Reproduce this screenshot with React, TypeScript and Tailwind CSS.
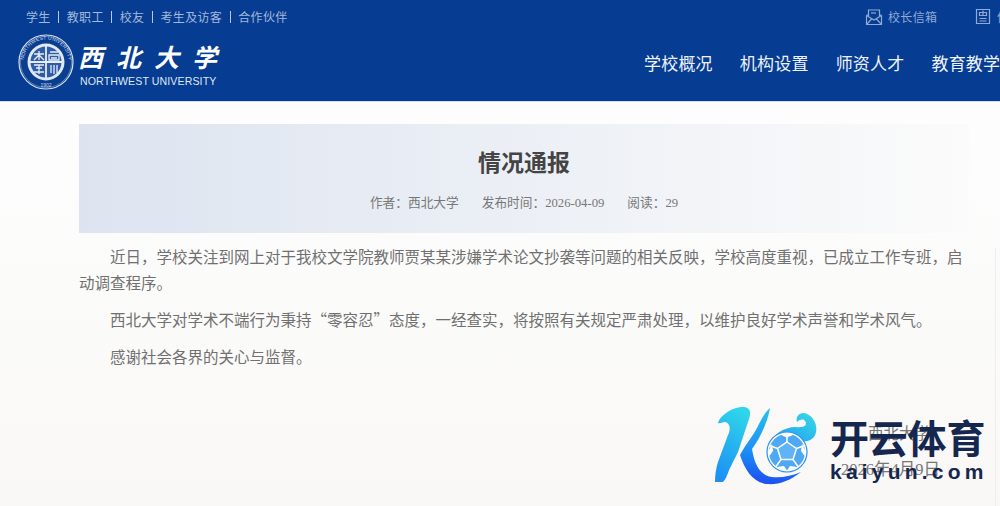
const CJK = "font-['Noto_Sans_CJK_SC','Liberation_Sans',sans-serif]";
const SERIF = "font-['Liberation_Serif','Noto_Sans_CJK_SC',serif]";

const topLinks = ['学生', '教职工', '校友', '考生及访客', '合作伙伴'];
const navItems = ['学校概况', '机构设置', '师资人才', '教育教学', '科学研究'];

const Seal = () => (
  <svg width="56" height="56" viewBox="0 0 56 56" className="shrink-0">
    <defs>
      <path id="ringTop" d="M5.5 28a22.5 22.5 0 0 1 45 0" />
    </defs>
    <circle cx="28" cy="28" r="27" fill="#0a3f90" stroke="#d5e0f1" strokeWidth="1.2" />
    <circle cx="28" cy="28" r="25.6" fill="none" stroke="#8fa9d3" strokeWidth="0.6" />
    <text fontSize="5" fill="#cddaee" fontFamily="Liberation Sans" letterSpacing="0.15">
      <textPath href="#ringTop" startOffset="2">NORTHWEST UNIVERSITY</textPath>
    </text>
    <text x="28" y="52.5" fontSize="5" fill="#cddaee" textAnchor="middle" fontFamily="Liberation Sans">1902</text>
    <circle cx="28" cy="28" r="18.5" fill="#dfe8f5" />
    <circle cx="28" cy="28" r="15.5" fill="#2f5ca5" />
    <g stroke="#e6edf8" strokeWidth="1.3" fill="none">
      <path d="M28 12v32M12 28h32" strokeWidth="1.8" />
      <path d="M21 17v9M16 20h10M16 26l5-5 5 5" />
      <path d="M32 18h8M31 21h10v5H31zM33 24h6" />
      <path d="M16 31h10M18 34h6M16 38h10M21 31v9" />
      <path d="M33 31v8M36 31v9M39 31v8" />
    </g>
  </svg>
);

const MailboxIcon = () => (
  <svg width="18" height="18" viewBox="0 0 18 18" fill="none" stroke="currentColor" strokeWidth="1.2" className="shrink-0">
    <path d="M3.5 8V2h11v6" />
    <path d="M6 5h5" />
    <path d="M1.5 7.5v9h15v-9l-2-1M3.5 6.500l-2 1" />
    <path d="M1.500 7.500 9 12l7.500-4.500M1.500 16.500 7 10.500M16.500 16.500 11 10.500" />
  </svg>
);

const NoticeIcon = () => (
  <svg width="16" height="17" viewBox="0 0 16 17" fill="none" stroke="currentColor" strokeWidth="1.2" className="shrink-0">
    <path d="M1.500 1.500h13v14h-13z" />
    <path d="M4.500 4.500h7v3h-7zM8 2.500v5M4.500 10.500h7M4.500 13h7" />
  </svg>
);

const KaiyunMark = () => (
  <svg width="110" height="84" viewBox="0 0 110 84" className="shrink-0">
    <defs>
      <linearGradient id="stemGrad" x1="0.6" y1="0" x2="0.3" y2="1">
        <stop offset="0" stopColor="#2fd6ea" />
        <stop offset="1" stopColor="#1d8ff5" />
      </linearGradient>
      <linearGradient id="sweepGrad" x1="0.6" y1="0" x2="0.5" y2="1">
        <stop offset="0" stopColor="#27c4ee" />
        <stop offset="0.6" stopColor="#1c8ff6" />
        <stop offset="1" stopColor="#1f4ff0" />
      </linearGradient>
      <linearGradient id="swirlGrad" x1="0" y1="1" x2="1" y2="0">
        <stop offset="0" stopColor="#1c8ff6" />
        <stop offset="1" stopColor="#38dbe6" />
      </linearGradient>
    </defs>
    <path
      fill="url(#stemGrad)"
      d="M4 18C6 10 20 1 30 2c7 1 7 6 5 12L24 47l-8 16c-3 7-5 14-8 14H1c0-7 1-14 3-20l10-27c3-6 2-12-3-13-3 0-5 2-7 1z"
    />
    <path
      fill="url(#sweepGrad)"
      d="M56 3C54 15 48 30 38 44c2 12 6 26 20 28 9 1 20-1 29-5-11 9-23 13-34 12C40 78 31 66 26 50c4-8 12-18 17-27 4-8 8-16 13-20z"
    />
    <path
      fill="url(#swirlGrad)"
      d="M54 40c4-10 16-18 28-18 8 1 12-2 9-6-2-3-6-1-8 1-2-6 4-11 10-8 9 4 12 16 7 23-5 6-14 5-22 0-8-2-18 1-24 8z"
    />
    <circle cx="73" cy="47" r="20" fill="#ffffff" stroke="#2a8ff0" strokeWidth="1.2" />
    <circle cx="73" cy="47" r="18" fill="#4ea8f3" />
    <g stroke="#ffffff" strokeWidth="1.5" fill="#5fb4f6">
      <path d="M73 37l9.500 6.500-3.500 11H67l-3.500-11z" />
      <path d="M73 37v-8M82.500 43.500l8-3M79 54.500l5 7M67 54.500l-5 7M63.500 43.500l-8-3" fill="none" />
    </g>
    <g fill="#ffffff">
      <path d="M66 29.500l7-1.500 7 1.500-7 3zM88 39l3.500 7-1 5-3.500-5zM58 39l-3.500 7 1 5 3.500-5zM63 62l5 3 5 .5-3-4.500zM83 62l-5 3-5 .5 3-4.500z" />
    </g>
  </svg>
);

const App = () => {
  return (
    <div lang="zh-CN" className={`relative h-[506px] w-[1000px] overflow-hidden bg-gradient-to-b from-white to-[#f9f8f7] ${CJK}`}>
      <header className="h-[102px] overflow-hidden border-b border-b-[#cfdff5] bg-[#063c91]">
        <div className="flex h-[33px] items-center justify-between pl-[26px] text-[12px] tracking-[0.35px] text-[#a3b9db]">
          <div className="flex items-center">
            {topLinks.map((link, i) => (
              <span key={link} className="flex items-center">
                {i > 0 && <span className="mx-[7.500px] h-[12px] w-px bg-[#b6c8e4]" />}
                {link}
              </span>
            ))}
          </div>
          <div className="flex shrink-0 items-center text-[#8faad3]">
            <span className="flex w-[110px] items-center gap-[5px]">
              <MailboxIcon />
              校长信箱
            </span>
            <span className="flex w-[25px] items-center gap-[6px] overflow-hidden">
              <NoticeIcon />
              <span className="shrink-0">信息公开</span>
            </span>
          </div>
        </div>
        <div className="flex h-[68px] items-start pl-[18px]">
          <div className="flex w-[200px] shrink-0 items-start gap-[4px] pt-[1px]">
            <Seal />
            <div className="flex flex-col pt-[7px] whitespace-nowrap text-white">
              <span className="h-[30px] text-[25px] leading-[30px] font-bold tracking-[13px] italic">西北大学</span>
              <span className="mt-[4px] ml-[2px] font-['Liberation_Sans',sans-serif] text-[10.600px] leading-[13px] tracking-[0.1px] text-[#dfe8f5]">NORTHWEST UNIVERSITY</span>
            </div>
          </div>
          <nav className="ml-[426px] flex shrink-0 gap-[27px] pt-[17px] text-[17px] leading-[26px] tracking-[0.2px] whitespace-nowrap text-[#eef3fb]">
            {navItems.map((item) => (
              <span key={item}>{item}</span>
            ))}
          </nav>
        </div>
      </header>

      <main className="pt-[22px] pr-[31px] pl-[79px]">
        <div className="flex h-[109px] flex-col items-center bg-gradient-to-r from-[#dde4f0] to-[#fbfbfb] pt-[21px]">
          <h1 className="text-[23px] leading-[32px] font-bold text-[#444444]">情况通报</h1>
          <div className={`mt-[17px] flex gap-[23px] text-[12.700px] leading-[18px] text-[#777777] ${SERIF}`}>
            <span>作者：西北大学</span>
            <span>发布时间：2026-04-09</span>
            <span>阅读：29</span>
          </div>
        </div>
        <div className="pt-[10px] text-[15.500px] leading-[26px] text-[#707070]">
          <p className="mb-[11px] indent-[31px]">
            近日，学校关注到网上对于我校文学院教师贾某某涉嫌学术论文抄袭等问题的相关反映，学校高度重视，已成立工作专班，启动调查程序。
          </p>
          <p className="mb-[11px] indent-[31px]">
            西北大学对学术不端行为秉持“零容忍”态度，一经查实，将按照有关规定严肃处理，以维护良好学术声誉和学术风气。
          </p>
          <p className="indent-[31px]">感谢社会各界的关心与监督。</p>
        </div>
      </main>

      <div className="absolute top-[422px] right-[70px] text-[15.500px] leading-[20px] text-[#777777]">西北大学</div>
      <div className="absolute top-[460px] right-[60px] font-['Liberation_Serif','Noto_Sans_CJK_SC',serif] text-[16.500px] leading-[20px] text-[#777777]">2026年4月9日</div>

      <div className="absolute top-[248px] right-[4px] bottom-0 w-px bg-[#eeeeee]" />

      <div className="absolute top-[405px] left-[714px] flex items-start gap-[6px]">
        <KaiyunMark />
        <div className="flex flex-col pt-[8px] text-[#16274f]">
          <span className="text-[39px] leading-[46px] font-bold tracking-[-0.2px] whitespace-nowrap">开云体育</span>
          <span className="mt-[1px] font-['Liberation_Sans',sans-serif] text-[21px] leading-[24px] font-bold tracking-[4.200px]">kaiyun.com</span>
        </div>
      </div>
    </div>
  );
};

export default App;
